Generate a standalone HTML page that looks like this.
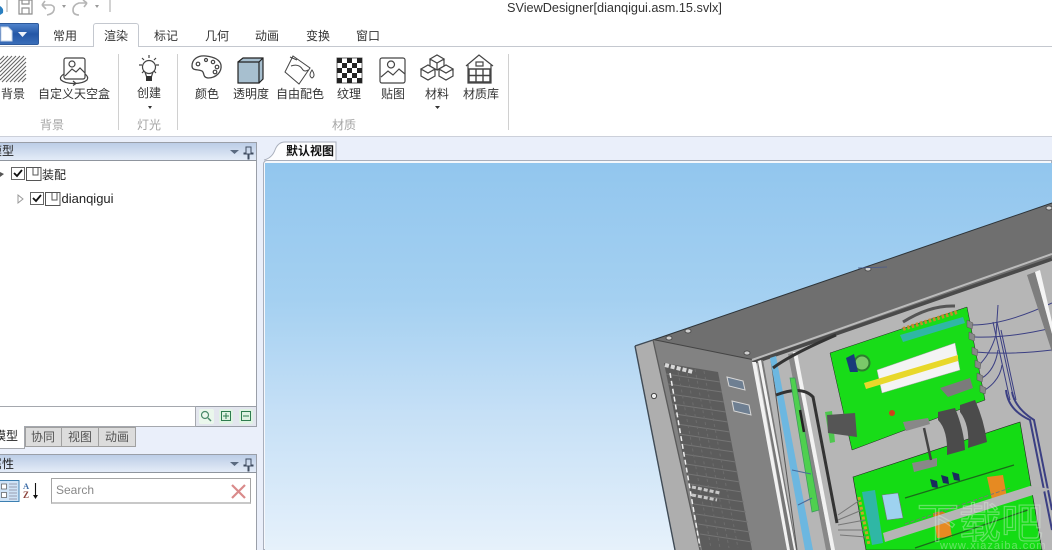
<!DOCTYPE html>
<html lang="zh"><head><meta charset="utf-8"><style>
*{box-sizing:border-box}
html,body{margin:0;padding:0;width:1052px;height:550px;overflow:hidden;background:#eaeffa}
body{position:relative;font-family:"Liberation Sans","Noto Sans CJK SC",sans-serif;font-size:12px;color:#222}
.a{position:absolute}
.t{position:absolute;white-space:nowrap;transform:translateX(-50%);line-height:16px;font-size:12px;color:#333}
.g{color:#a5a5a5}
.sep{position:absolute;width:1px;background:#d0d0d0;top:54px;height:76px}
.title{position:absolute;left:0;width:257px;height:19px;background:linear-gradient(#bccde6,#e4ecf8);border:1px solid #9a9fa8;border-bottom-color:#8f959e}
svg{position:absolute;left:0;top:0}
</style></head><body>
<div class="a" style="left:0;top:0;width:1052px;height:136px;background:#fff"></div>
<div class="a" style="left:0;top:46px;width:1052px;height:1px;background:#c4c8cf"></div>
<div class="a" style="left:0;top:136px;width:1052px;height:1px;background:#ccd0da"></div>
<div class="a" style="left:507px;top:1px;font-size:12.7px;line-height:15px;color:#333;white-space:nowrap">SViewDesigner[dianqigui.asm.15.svlx]</div>

<div class="a" style="left:-3px;top:23px;width:42px;height:22px;background:linear-gradient(#4f83cb,#2457a6 50%,#3a6db8);border:1px solid #2d5a9c;border-radius:2px"></div>
<div class="a" style="left:93px;top:23px;width:46px;height:24px;background:#fff;border:1px solid #c4c8cf;border-bottom:none;border-radius:3px 3px 0 0"></div>

<div class="t" style="left:65px;top:28px">常用</div><div class="t" style="left:116px;top:28px">渲染</div><div class="t" style="left:166px;top:28px">标记</div><div class="t" style="left:217px;top:28px">几何</div><div class="t" style="left:267px;top:28px">动画</div><div class="t" style="left:318px;top:28px">变换</div><div class="t" style="left:368px;top:28px">窗口</div>

<div class="t" style="left:13px;top:86px">背景</div><div class="t" style="left:74px;top:86px">自定义天空盒</div><div class="t" style="left:149px;top:85px">创建</div><div class="t" style="left:207px;top:86px">颜色</div><div class="t" style="left:251px;top:86px">透明度</div><div class="t" style="left:300px;top:86px">自由配色</div><div class="t" style="left:349px;top:86px">纹理</div><div class="t" style="left:393px;top:86px">贴图</div><div class="t" style="left:437px;top:86px">材料</div><div class="t" style="left:481px;top:86px">材质库</div>
<div class="t g" style="left:52px;top:117px">背景</div><div class="t g" style="left:149px;top:117px">灯光</div><div class="t g" style="left:344px;top:117px">材质</div>
<div class="sep" style="left:118px"></div><div class="sep" style="left:177px"></div><div class="sep" style="left:508px"></div>

<!-- left panels -->
<div class="a" style="left:0;top:142px;width:257px;height:285px;background:#fff;border:1px solid #9a9fa8;border-left:none"></div>
<div class="title" style="top:142px;border-left:none"></div>
<div class="t" style="left:2px;top:143px;color:#222">模型</div>
<div class="a" style="left:196px;top:406px;width:61px;height:21px;background:#e3e6ee;border:1px solid #9a9fa8;border-left:none"></div>
<div class="a" style="left:0;top:406px;width:196px;height:21px;background:#fff;border:1px solid #a5a8ae;border-left:none"></div>
<div class="a" style="left:0;top:426px;width:25px;height:23px;background:#fff;border:1px solid #a5a8ae;border-top:none;border-left:none"></div>
<div class="a" style="left:25px;top:427px;width:111px;height:20px;background:#dcdcdc;border:1px solid #a0a0a0"></div>
<div class="a" style="left:61px;top:427px;width:1px;height:20px;background:#a0a0a0"></div>
<div class="a" style="left:98px;top:427px;width:1px;height:20px;background:#a0a0a0"></div>
<div class="t" style="left:6px;top:428px;color:#222">模型</div><div class="t" style="left:43px;top:429px;color:#555">协同</div><div class="t" style="left:80px;top:429px;color:#555">视图</div><div class="t" style="left:117px;top:429px;color:#555">动画</div>
<div class="a" style="left:0;top:454px;width:257px;height:100px;background:#fff;border:1px solid #9a9fa8;border-left:none"></div>
<div class="title" style="top:454px;border-left:none"></div>
<div class="t" style="left:2px;top:456px;color:#222">属性</div>
<div class="a" style="left:51px;top:478px;width:200px;height:26px;background:#fff;border:1px solid #a5a5a5;border-bottom:2px solid #c8c8c8"></div>
<div class="a" style="left:56px;top:483px;font-size:12px;line-height:15px;color:#888">Search</div>
<div class="a" style="left:42px;top:167px;line-height:16px;color:#222">装配</div>
<div class="a" style="left:61.500px;top:191px;line-height:16px;font-size:13px;color:#222">dianqigui</div>

<!-- document tab + viewport -->
<div class="a" style="left:263px;top:160px;width:789px;height:390px;background:#f6f8fc;border:1px solid #a9afbc;border-radius:4px 0 0 0"></div>
<div class="a" style="left:265px;top:163px;width:787px;height:387px;background:linear-gradient(#92c6ee 0,#a4d0f1 35%,#c6e0f6 65%,#e6f1fb 100%)"></div>

<svg width="1052" height="550" viewBox="0 0 1052 550" xmlns="http://www.w3.org/2000/svg">
<!-- doc tab -->
<path d="M264 160 Q272 158 275 150 Q278 142 285 142 H336 V160" fill="#fdfdfe" stroke="#a9afbc"/>
<!-- QAT -->
<g fill="none" stroke="#8e8e8e" stroke-width="1.2">
<path d="M7 0V12M110 0V12" stroke="#b5b5b5"/>
<path d="M19 0H32V14H19Z M22 0V4H29V0 M22 8H29V14H22Z"/>
<path d="M42 5H51Q55 6 54 10T47 15M42 5L45 1M42 5L46 9" stroke="#b5b5b5" stroke-width="1.6"/>
<path d="M87 3H79Q73 5 73 10T79 15M87 3L83 0M87 3L84 7" stroke="#b5b5b5" stroke-width="1.6"/>
</g>
<path d="M62 5h4l-2 3zM95 5h4l-2 3z" fill="#999"/>
<path d="M0 6Q4 8 3 13L0 15Z" fill="#2a7fc0"/>
<!-- file btn -->
<path d="M1 27H8L12 31V41H1Z" fill="#fff" stroke="#c5d4e8"/>
<path d="M18 32H27L22.500 37Z" fill="#eef3fb"/>
<!-- ribbon icons -->
<g stroke="#666" stroke-width="1.100" fill="none">
<path d="M0 60L4 56M0 64L8 56M0 68L12 56M0 72L16 56M0 76L20 56M0 80L24 56M2 82L26 58M6 82L26 62M10 82L26 66M14 82L26 70M18 82L26 74M22 82L26 78"/>
</g>
<g fill="none" stroke="#444" stroke-width="1.2">
<rect x="64" y="58" width="21" height="21" rx="2"/>
<circle cx="72" cy="64" r="3"/>
<path d="M65 76L72 69L76 72L80 68L85 73"/>
<path d="M64 74Q59 77 61 80Q65 83.500 74 83.500Q83 83.500 87 80Q89 77 85 74"/>
<path d="M73 81l3 2.500-3 2"/>
<circle cx="149" cy="67" r="6.500"/>
<path d="M145 72L147 78H151L153 72"/>
<path d="M149 55V58M139 65H142M156 65H159M142 58L144 60M156 58L154 60M142 73L144 71M156 73L154 71"/>
<path d="M206 56C197 55 192 60 192 66C192 71 198 69 202 71C205 73 202 77 208 78C216 78 222 72 221 65C220 60 214 57 206 56Z" stroke-width="1.3"/>
<circle cx="198" cy="64" r="1.800"/><circle cx="206" cy="60" r="1.500"/><circle cx="213" cy="62" r="1.700"/><circle cx="217" cy="67" r="1.800"/><circle cx="215" cy="72" r="1.800"/>
<path d="M293 56L285 72L299 84L310 68ZM290 57L297 60" stroke-width="1"/>
<path d="M291 66Q299 63 303 70Q305 72 308 70" stroke-width="1"/>
<path d="M312 70Q308 76 312 78Q316 76 312 70Z" stroke-width="1"/>
<rect x="380" y="58" width="25" height="25" rx="2"/><circle cx="391" cy="64.500" r="3.500"/><path d="M381 77L388 71L393 75L399 69L405 74"/>
<path d="M430 59L437 55L444 59L437 63ZM430 59V66L437 70V63M444 59V66L437 70M421 69L428 65L435 69L428 73ZM421 69V76L428 80L435 76V69M439 69L446 65L453 69L446 73ZM439 69V76L446 80L453 76V69"/>
<path d="M466 66L479 55L493 66M468 65V83H491V65"/>
<rect x="476" y="62" width="7" height="4"/>
<path d="M469 69H490V82H469ZM476 69V82M483 69V82M469 75.500H490" stroke-width="1.400"/>
</g>
<path d="M146 76H152V81H146Z" fill="#333"/>
<path d="M148 106h4l-2 3zM435 106h5l-2.500 3z" fill="#333"/>
<!-- cube -->
<path d="M238 62L243 58H263V79L259 83H238Z" fill="#a7bfcf"/>
<path d="M238 62H259V83H238ZM238 62L243 58H263V79L259 83M259 62L263 58" fill="none" stroke="#222" stroke-width="1.200"/>
<!-- checker -->
<rect x="337" y="58" width="25" height="25" fill="#fff" stroke="#666"/>
<path d="M337 58h5v5h-5zM347 58h5v5h-5zM357 58h5v5h-5zM342 63h5v5h-5zM352 63h5v5h-5zM337 68h5v5h-5zM347 68h5v5h-5zM357 68h5v5h-5zM342 73h5v5h-5zM352 73h5v5h-5zM337 78h5v5h-5zM347 78h5v5h-5zM357 78h5v5h-5z" fill="#222"/>
<!-- panel title pins -->
<path d="M230 150h9l-4.500 4z" fill="#5a6a80"/><path d="M230 462h9l-4.500 4z" fill="#5a6a80"/>
<path d="M246 147h5v6h2v1h-4v5h-1v-5h-4v-1h2z" fill="none" stroke="#3f4c60"/>
<path d="M246 459h5v6h2v1h-4v5h-1v-5h-4v-1h2z" fill="none" stroke="#3f4c60"/>
<!-- tree -->
<path d="M0 172l4 2-4 3z" fill="#555"/>
<path d="M18 195l5 4-5 4z" fill="#fff" stroke="#999"/>
<g fill="#fff" stroke="#666">
<rect x="11.500" y="167.500" width="13" height="12"/><rect x="30.500" y="192.500" width="13" height="12"/>
<path d="M26.500 167.500H41V180.500H26.500ZM33 167.500V175H38V167.500" fill="#fff" stroke="#555"/>
<path d="M45.500 192.500H60V205.500H45.500ZM52 192.500V200H57V192.500" fill="#fff" stroke="#555"/>
</g>
<path d="M14 173l3 3 5-6M33 198l3 3 5-6" fill="none" stroke="#111" stroke-width="1.800"/>
<!-- search row icons -->
<rect x="199" y="409" width="15" height="15" rx="2" fill="#eaf7ec"/><rect x="219" y="409" width="14" height="15" rx="2" fill="#dff3e3"/><rect x="239" y="409" width="14" height="15" rx="2" fill="#dff3e3"/>
<circle cx="205" cy="415" r="3.500" fill="none" stroke="#4a8a6a" stroke-width="1.200"/><path d="M208 418l3 3" stroke="#4a8a6a" stroke-width="1.500"/>
<path d="M221.500 411.500h9v9h-9zM226 413v6M223 416h6M241.500 411.500h9v9h-9zM243 416h6" fill="none" stroke="#2f7d4f"/>
<!-- properties toolbar -->
<rect x="-1" y="480.500" width="20" height="21" fill="#cfe3f6" stroke="#3c7fb1"/>
<g fill="#fff" stroke="#555" stroke-width=".7"><rect x="1.500" y="484" width="5" height="5"/><rect x="1.500" y="492.500" width="5" height="5"/></g>
<path d="M9 484H17M9 487H17M9 490H17M9 493H17M9 496H17M9 499H17" stroke="#889" stroke-width=".8"/>
<text x="23" y="489" font-family="Liberation Serif" font-size="8.500" font-weight="bold" fill="#3f6ea8">A</text>
<text x="23" y="498" font-family="Liberation Serif" font-size="9" font-weight="bold" fill="#8a4038">Z</text>
<path d="M35.500 483V496" stroke="#111" stroke-width="1.100"/><path d="M33 495h5l-2.500 4z" fill="#111"/>
<path d="M232 485L245 498M245 485L232 498" stroke="#d98a8a" stroke-width="2.200"/>

<!-- ======== 3D MODEL ======== -->
<clipPath id="v"><rect x="265" y="163" width="787" height="387"/></clipPath>
<g clip-path="url(#v)">
<!-- top plate -->
<path d="M653 340L1052 203V258L752 362Z" fill="#6f6f6f"/>
<path d="M653 340L1052 203" stroke="#2c3338" stroke-width="1"/>
<path d="M653 340L752 360" stroke="#444" stroke-width="2"/>
<!-- inner cabinet -->
<path d="M752 362L1052 258V550H790Z" fill="#b6b6b6"/>
<path d="M752 360L1052 254" stroke="#bbb" stroke-width="2"/>
<path d="M752 363L1052 259" stroke="#4a4a4a" stroke-width="3.500"/>
<!-- side flange + panel -->
<path d="M635 346L653 340L700 550H675Z" fill="#aeaeae"/>
<path d="M653 340L752 360L790 550H700Z" fill="#828282"/>
<path d="M635 346L675 550" stroke="#3f4a55" stroke-width="1.400"/>
<path d="M635 346L653 340" stroke="#3f4a55" stroke-width="1.400"/>
<path d="M653 340L700 550" stroke="#5a5a5a" stroke-width="1.300"/>
<circle cx="654" cy="396" r="2.600" fill="#eee" stroke="#444"/>
<!-- vent -->
<path d="M664 363L718 372L752 550H702Z" fill="#5c5c5c"/>
<g stroke="#757575" stroke-width="1">
<path d="M666 374L720 382M668 384L722 392M670 394L724 402M672 404L726 412M675 414L728 422M677 424L730 432M679 434L732 442M681 444L734 452M683 454L736 462M686 464L738 472M688 474L740 482M690 484L742 492M692 494L744 502M694 504L746 512M696 514L748 522M698 524L750 532M700 534L752 542"/>
<path d="M677 366L711 548M686 367L720 548M695 369L729 548M704 371L738 548" stroke-dasharray="3 3" stroke="#6c6c6c"/>
</g>
<path d="M670 373L700 547" stroke="#eee" stroke-width="1.500" stroke-dasharray="5 3"/>
<path d="M692 487L720 493M692 495L717 500" stroke="#c8c8c8" stroke-width="3" stroke-dasharray="4 2"/>
<path d="M665 365L693 372" stroke="#d8d8d8" stroke-width="4" stroke-dasharray="4 2"/>
<!-- connectors -->
<path d="M727 377L743 381L745 390L729 386Z" fill="#6e7f92" stroke="#d8d8d8"/>
<path d="M732 401L749 405L751 415L734 411Z" fill="#6e7f92" stroke="#d8d8d8"/>
<!-- frame strips -->
<path d="M752 362L756 362L790 550H787Z" fill="#f2f2f2"/>
<path d="M757 361L763 360L797 550H790Z" fill="#777"/>
<path d="M758 361L761 360L796 550H794Z" fill="#f2f2f2"/>
<path d="M771 360L797 550" stroke="#555" stroke-width="1"/>
<path d="M770 358L776 356L813 550H805Z" fill="#6cb7e0"/>
<path d="M793 352L797 352L835 550H831Z" fill="#f2f2f2"/>
<path d="M788 354L793 353L831 550H826Z" fill="#888"/>
<!-- dark cable -->
<path d="M773 368Q790 355 836 335M776 395Q802 385 813 397L837 523" fill="none" stroke="#333" stroke-width="3"/>
<!-- side board -->
<path d="M790 378L795 378L819 510L812 512Z" fill="#4fd04f" stroke="#3a9a5a" stroke-width=".7"/>
<path d="M800 410L804 432" stroke="#222" stroke-width="2.500"/>
<path d="M792 470L811 474M798 505L812 498" stroke="#4a6a9a" stroke-width="1"/>
<!-- main boards -->
<path d="M830 353L967 307L985 400L852 450Z" fill="#18dc18" stroke="#222" stroke-width=".5"/>
<path d="M853 477L1020 422L1042 550H866Z" fill="#14dc14" stroke="#222" stroke-width=".6"/>
<!-- board1 parts -->
<path d="M900 335L963 317L965 323L903 342Z" fill="#2fb7a5"/>
<path d="M903 329L957 312" stroke="#c68d2a" stroke-width="4" stroke-dasharray="2.500 2"/>
<path d="M903 322Q930 305 955 306" stroke="#555" stroke-width="3" fill="none"/>
<path d="M877 370L955 343L960 370L882 393Z" fill="#f4f4f4" stroke="#aaa" stroke-width=".5"/>
<path d="M864 383L958 355L958 361L866 389Z" fill="#e8d82a"/>
<circle cx="862" cy="363" r="7.500" fill="#7bc86a" stroke="#2e7d2e" stroke-width="2"/>
<path d="M846 358L854 354L858 372L850 372Z" fill="#1a3a7a"/>
<path d="M940 388L970 378L973 388L948 397Z" fill="#7b7b7b"/>
<!-- resistors and wires -->
<g fill="none" stroke="#3b3f83" stroke-width="1">
<path d="M972 325Q1005 325 1052 303M975 337Q1010 338 1052 328M975 352Q1010 355 1052 350M978 366Q990 355 996 335L998 305M982 378Q995 370 998 350M985 390Q1000 380 1002 365"/>
<path d="M993 322L1010 400M997 322L1014 400M1001 330L1016 400"/>
<path d="M1006 390Q1008 410 1030 420L1052 530M1012 392Q1015 408 1034 420L1052 510" stroke-width="2"/>
</g>
<path d="M967 320l6 3-1 6-5-2zM969 332l6 3-1 6-5-2zM972 347l6 3-1 6-5-2zM975 360l6 3-1 6-5-2zM977 373l6 3-1 6-5-2zM980 385l6 3-1 6-5-2z" fill="#888" stroke="#555" stroke-width=".5"/>
<!-- Right strip -->
<path d="M1027 275L1035 272L1052 333V352Z" fill="#7e7e7e"/>
<path d="M1035 272L1040 270L1052 322V334Z" fill="#f4f4f4"/>
<!-- black straps -->
<path d="M938 412L955 408Q964 430 965 450L947 455Q948 430 938 420Z" fill="#4b4b4b"/>
<path d="M960 405L975 400Q984 420 987 442L968 448Q970 425 960 412Z" fill="#4b4b4b"/>
<path d="M825 412L832 411L835 442L830 443Z" fill="#4ec84e"/>
<path d="M827 415L855 413L857 437L828 433Z" fill="#555"/>
<path d="M903 422L928 418L930 424L906 431Z" fill="#888"/>
<path d="M912 463L937 458L937 466L914 472Z" fill="#888"/>
<path d="M924 428L931 460" stroke="#444" stroke-width="2.500"/>
<circle cx="892" cy="413" r="3" fill="#d0401a"/>
<path d="M930 479l7 2 1 7-6-1zM941 475l7 2 1 7-6-1zM952 472l7 2 1 7-6-1z" fill="#1a2a5e"/>
<path d="M905 498L1014 465" stroke="#1a6a1a" stroke-width="1.200"/>
<!-- second board parts -->
<path d="M862 492L875 490L883 543L872 545Z" fill="#2fb7a5"/>
<path d="M859 497L869 545" stroke="#c6a62a" stroke-width="3" stroke-dasharray="3 2"/>
<path d="M882 495L898 493L903 518L887 520Z" fill="#9ed2f0" stroke="#777" stroke-width=".6"/>
<path d="M838 515L860 500M838 520L862 510M838 525L865 520M838 530L866 530M840 535L866 537" stroke="#777" stroke-width="1" fill="none"/>
<path d="M987 477L1003 475L1007 498L992 500Z" fill="#e68a22"/>
<path d="M933 513L948 513L952 537L937 538Z" fill="#e68a22"/>
<ellipse cx="940" cy="515" rx="7" ry="3.500" fill="#d17a1a"/>
<path d="M883 533L1030 486L1052 489L885 542Z" fill="#b5b5b5"/>
<path d="M905 524L1010 488" stroke="#777" stroke-width="1" stroke-dasharray="4 2"/>
<path d="M915 548L1028 510" stroke="#1a6a1a" stroke-width="1.200"/>
<!-- screws -->
<g fill="#cfcfcf" stroke="#444" stroke-width=".8">
<ellipse cx="669" cy="338" rx="3" ry="2"/><ellipse cx="688" cy="331" rx="3" ry="2"/><ellipse cx="747" cy="353" rx="3" ry="2"/><ellipse cx="868" cy="269" rx="3" ry="2"/><ellipse cx="1049" cy="208" rx="3" ry="2"/>
</g>
<path d="M858 268L887 267" stroke="#4a5a8a" stroke-width=".7"/>
<!-- watermark -->
<g font-family="Liberation Sans,Noto Sans CJK SC,sans-serif" opacity=".4">
<text x="917" y="538" font-size="42" fill="none" stroke="#dcefdc" stroke-width="1.200" textLength="126">下载吧</text>
<text x="940" y="549" font-size="11" fill="#e0eedd" letter-spacing="1">www.xiazaiba.com</text>
</g>
</g>
</svg>
<div class="a" style="left:286px;top:143px;font-size:12px;line-height:16px;color:#111;font-weight:bold">默认视图</div>
</body></html>
